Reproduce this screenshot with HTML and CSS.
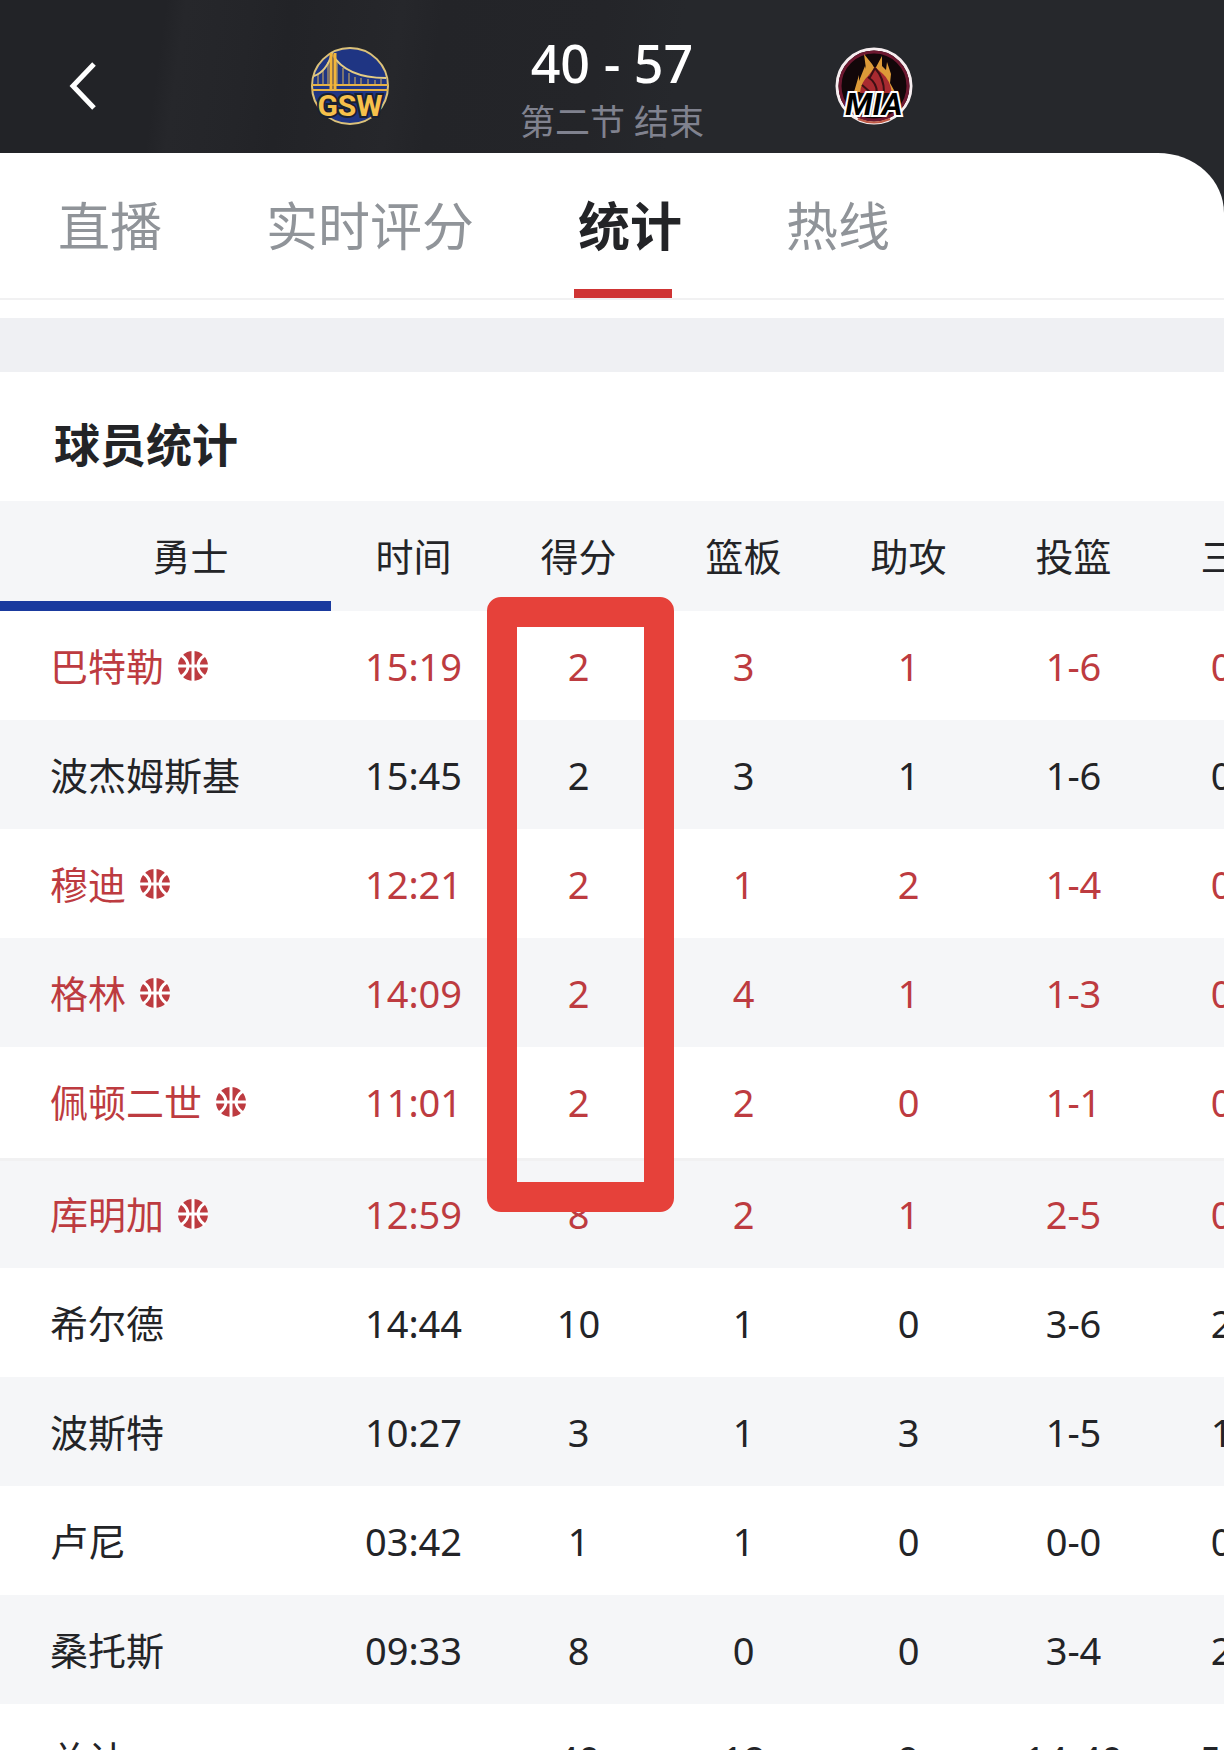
FILE: index.html
```
<!DOCTYPE html>
<html lang="zh-CN">
<head>
    <meta charset="UTF-8">
    <meta name="viewport" content="width=device-width, initial-scale=1.0">
    <title>球员统计</title>
    <link rel="stylesheet" href="styles.css">
</head>
<body>

    <!-- basketball mark shown next to a name -->
    <svg class="sprite" aria-hidden="true">
        <symbol id="ball" viewBox="0 0 30 30">
            <circle cx="15" cy="15" r="15" fill="currentColor"/>
            <path class="seam" d="M15 0V30M0 15H30M3 4Q10 9 10 15T3 26M27 4Q20 9 20 15T27 26"/>
        </symbol>
    </svg>

    <div class="top">
        <header class="header">
            <button type="button" class="back" aria-label="返回">
                <svg width="30" height="50" viewBox="0 0 30 50"><path d="M26 3L5 25L26 47" fill="none" stroke="#fff" stroke-width="5"/></svg>
            </button>
            <div class="match">
                <svg class="logo" viewBox="0 0 80 80" role="img" aria-label="GSW">
                    <circle cx="40" cy="40" r="38" fill="#1f3583" stroke="#dcc27a" stroke-width="2"/>
                    <g fill="none" stroke="#d9b45c" stroke-width="1">
                        <path d="M8 28V38M13 24V38M18 16V38M27 15V38M33 22V38M39 27V38M45 31V38M51 32V38M58 33V38M65 34V38M71 33V38"/>
                        <path d="M4 30Q16 26 22 8Q36 32 76 32" stroke="#e4cc83" stroke-width="2"/>
                    </g>
                    <path d="M2 39H78M2 44H78" stroke="#e5b247" stroke-width="2"/>
                    <path d="M21 7V43M25 7V43" stroke="#f2b53a" stroke-width="3"/>
                    <path d="M23 8V43" stroke="#a87a34" stroke-width="1"/>
                    <text x="40" y="70" class="gsw">GSW</text>
                </svg>
                <div class="score">
                    <div class="score-line">40 - 57</div>
                    <div class="period">第二节 结束</div>
                </div>
                <svg class="logo" viewBox="0 0 80 80" role="img" aria-label="MIA">
                    <circle cx="40" cy="40" r="37" fill="#120709" stroke="#f6eef0" stroke-width="3"/>
                    <circle cx="40" cy="40" r="34" fill="none" stroke="#6d1830" stroke-width="3"/>
                    <path d="M20 46L25 29L25 35L31 20L32 23L30 8L38 18L41 23L48 10L48 20L52 24L53 16L57 28L56 37L61 46Z" fill="#dd9a38"/>
                    <path d="M26 47Q27 36 34 30L41 21L49 28Q56 34 58 47Z" fill="#a82a30"/>
                    <path d="M34 31Q43 37 43 47M41 22Q50 32 50 46M28 39L36 46M41 22L35 33" fill="none" stroke="#3b1014" stroke-width="2"/>
                    <path d="M24 73Q40 80 56 73" fill="none" stroke="#c05a45" stroke-width="2"/>
                    <text x="40" y="69" class="mia">MIA</text>
                </svg>
            </div>
        </header>

        <nav class="tabs">
            <button type="button" class="tab">直播</button>
            <button type="button" class="tab">实时评分</button>
            <button type="button" class="tab active">统计</button>
            <button type="button" class="tab">热线</button>
        </nav>
    </div>

    <main class="stats">
        <h2 class="stats-title">球员统计</h2>
        <div class="table-wrap">
            <table>
                <thead>
                    <tr>
                        <th class="team">勇士</th>
                        <th>时间</th>
                        <th>得分</th>
                        <th>篮板</th>
                        <th>助攻</th>
                        <th>投篮</th>
                        <th>三分</th>
                    </tr>
                </thead>
                <tbody>
                    <tr class="on-court">
                        <td class="name"><span class="player">巴特勒<svg class="ball"><use href="#ball"/></svg></span></td>
                        <td>15:19</td><td>2</td><td>3</td><td>1</td><td>1-6</td><td>0-2</td>
                    </tr>
                    <tr>
                        <td class="name"><span class="player">波杰姆斯基</span></td>
                        <td>15:45</td><td>2</td><td>3</td><td>1</td><td>1-6</td><td>0-3</td>
                    </tr>
                    <tr class="on-court">
                        <td class="name"><span class="player">穆迪<svg class="ball"><use href="#ball"/></svg></span></td>
                        <td>12:21</td><td>2</td><td>1</td><td>2</td><td>1-4</td><td>0-3</td>
                    </tr>
                    <tr class="on-court">
                        <td class="name"><span class="player">格林<svg class="ball"><use href="#ball"/></svg></span></td>
                        <td>14:09</td><td>2</td><td>4</td><td>1</td><td>1-3</td><td>0-2</td>
                    </tr>
                    <tr class="on-court starters-end">
                        <td class="name"><span class="player">佩顿二世<svg class="ball"><use href="#ball"/></svg></span></td>
                        <td>11:01</td><td>2</td><td>2</td><td>0</td><td>1-1</td><td>0-0</td>
                    </tr>
                    <tr class="on-court">
                        <td class="name"><span class="player">库明加<svg class="ball"><use href="#ball"/></svg></span></td>
                        <td>12:59</td><td>8</td><td>2</td><td>1</td><td>2-5</td><td>0-1</td>
                    </tr>
                    <tr>
                        <td class="name"><span class="player">希尔德</span></td>
                        <td>14:44</td><td>10</td><td>1</td><td>0</td><td>3-6</td><td>2-4</td>
                    </tr>
                    <tr>
                        <td class="name"><span class="player">波斯特</span></td>
                        <td>10:27</td><td>3</td><td>1</td><td>3</td><td>1-5</td><td>1-4</td>
                    </tr>
                    <tr>
                        <td class="name"><span class="player">卢尼</span></td>
                        <td>03:42</td><td>1</td><td>1</td><td>0</td><td>0-0</td><td>0-0</td>
                    </tr>
                    <tr>
                        <td class="name"><span class="player">桑托斯</span></td>
                        <td>09:33</td><td>8</td><td>0</td><td>0</td><td>3-4</td><td>2-2</td>
                    </tr>
                    <tr>
                        <td class="name"><span class="player">总计</span></td>
                        <td></td><td>40</td><td>18</td><td>9</td><td>14-40</td><td>5-21</td>
                    </tr>
                </tbody>
            </table>
            <div class="highlight"></div>
        </div>
    </main>

</body>
</html>
```
FILE: styles.css
```
* {
    box-sizing: border-box;
}

body {
    font-family: "Noto Sans", "Noto Sans CJK SC", sans-serif;
    background-color: #fff;
    color: #232427;
    margin: 0;
    height: 100vh;
    overflow: hidden;
}

button {
    background: none;
    border: none;
    padding: 0;
    font-family: inherit;
    cursor: pointer;
}

.sprite {
    display: none;
}

.seam {
    fill: none;
    stroke: #fff;
    stroke-width: 3;
}

/* Dark match bar, slightly lighter slanted bands */
.top {
    background: linear-gradient(98deg, #222327 0, #222327 165px, #26272b 185px, #242529 250px, #222327 290px, #26272b 400px, #232428 440px, #242529 600px, #26282c 680px);
}

.header {
    display: grid;
    grid-template-columns: 1fr auto 1fr;
    align-items: center;
    padding: 27px 0 8px;
}

.back {
    justify-self: start;
    margin-left: 68px;
    height: 50px;
}

.match {
    display: flex;
    align-items: center;
    gap: 130px;
}

.logo {
    width: 80px;
    height: 80px;
}

.gsw, .mia {
    font-family: Roboto, sans-serif;
    font-weight: bold;
    text-anchor: middle;
    paint-order: stroke;
}

.gsw {
    font-size: 30px;
    fill: #f6c04b;
    stroke: #1a2030;
    stroke-width: 4px;
}

.mia {
    font-size: 32px;
    font-style: italic;
    fill: #000;
    stroke: #fff;
    stroke-width: 4px;
}

.score {
    padding-top: 6px;
    text-align: center;
}

.score-line {
    font-size: 52px;
    font-weight: 500;
    line-height: 60px;
    color: #fff;
}

.period {
    margin-top: 6px;
    font-size: 35px;
    line-height: 46px;
    color: #80828f;
}

.tabs {
    display: flex;
    gap: 104px;
    padding-left: 58px;
    background-color: #fff;
    border-bottom: 2px solid #f1f1f2;
    border-top-right-radius: 66px 60px;
}

.tab {
    position: relative;
    font-size: 52px;
    line-height: 145px;
    color: #909499;
}

.tab.active {
    color: #232427;
    font-weight: bold;
}

.tab.active::after {
    content: "";
    position: absolute;
    left: -4px;
    bottom: 0;
    width: 98px;
    height: 9px;
    background-color: #cf3434;
}

.stats {
    margin-top: 18px;
    border-top: 54px solid #eff0f3;
}

.stats-title {
    margin: 0;
    padding: 42px 54px 27px;
    font-size: 46px;
    line-height: 60px;
}

.table-wrap {
    position: relative;
    overflow: hidden;
}

table {
    table-layout: fixed;
    width: 1321px;
    border-collapse: collapse;
    font-size: 38px;
    line-height: 50px;
}

th, td {
    width: 165px;
    height: 109px;
    padding: 0;
    text-align: center;
    font-weight: normal;
}

th {
    height: 110px;
    background-color: #f5f6f8;
}

.team {
    position: relative;
    width: 331px;
    padding-left: 50px;
}

.team::after {
    content: "";
    position: absolute;
    left: 0;
    bottom: 0;
    width: 100%;
    height: 10px;
    background-color: #1a3a9e;
}

.name {
    padding-left: 50px;
}

.player {
    display: flex;
    align-items: center;
    gap: 14px;
}

.ball {
    width: 30px;
    height: 30px;
}

tbody tr:nth-child(even) {
    background-color: #f5f6f8;
}

.on-court {
    color: #bd3b40;
}

.starters-end td {
    height: 112px;
    border-bottom: 3px solid #f1f1f2;
}

/* Red frame round the scoring column */
.highlight {
    position: absolute;
    left: 487px;
    top: 96px;
    width: 187px;
    height: 615px;
    border: 30px solid #e6413a;
    border-radius: 14px;
}
```
